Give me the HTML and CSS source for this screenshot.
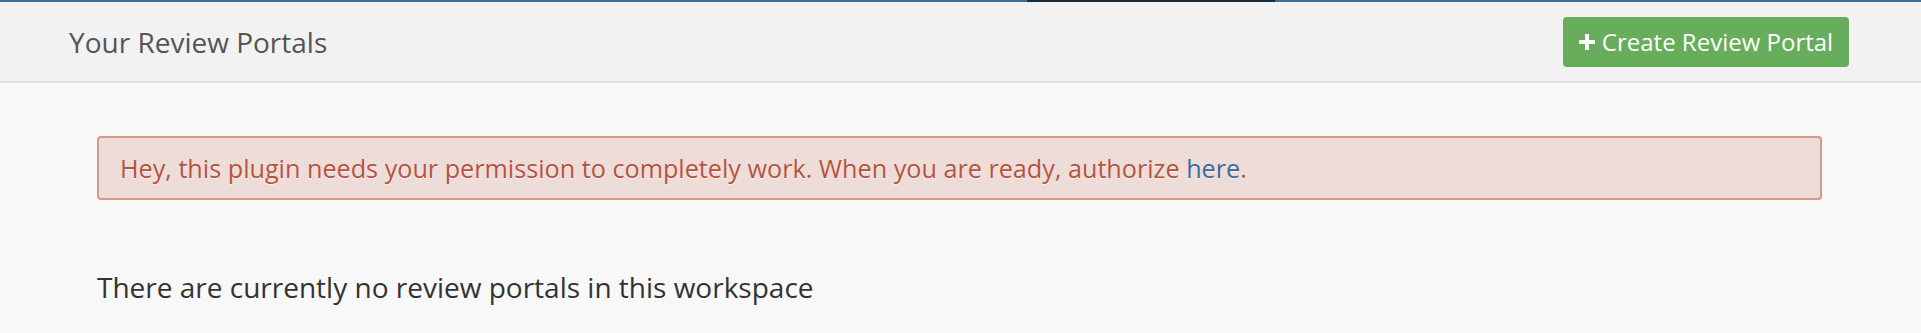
FILE: index.html
```html
<!DOCTYPE html>
<html lang="en">
<head>
  <meta charset="UTF-8">
  <title>Your Review Portals</title>
  <link rel="stylesheet" href="styles.css">
</head>
<body>
  <div class="topbar"><span class="seg-dark"></span></div>
  <header class="page-header">
    <h1 class="title">Your Review Portals</h1>
    <button class="btn-create">
      <svg class="plus" width="16" height="16" viewBox="0 0 16 16"><path d="M6 0h4v6h6v4h-6v6h-4v-6h-6v-4h6z" fill="#fff"/></svg>
      Create Review Portal
    </button>
  </header>

  <main class="content">
    <div class="alert">
      <span>Hey, this plugin needs your permission to completely work. When you are ready, authorize <a href="#">here</a>.</span>
    </div>
    <p class="empty">There are currently no review portals in this workspace</p>
  </main>
</body>
</html>
```

FILE: styles.css
```css
body {
  margin: 0;
  background: #f8f8f8;
  font-family: "Open Sans", "Noto Sans", sans-serif;
  color: #333;
}

.topbar {
  height: 2px;
  background: #3f6d99;
  position: relative;
}
.seg-dark {
  position: absolute;
  left: 1027px;
  width: 248px;
  top: 0;
  height: 2px;
  background: #1f2c3b;
}

.page-header {
  height: 79px;
  background: #f2f2f2;
  border-bottom: 2px solid #e2e2e2;
  display: flex;
  justify-content: space-between;
  align-items: center;
  padding: 0 72px 0 69px;
}
.title {
  margin: 0;
  font-size: 28px;
  font-weight: 400;
  color: #555;
}
.btn-create {
  height: 50px;
  width: 286px;
  border: none;
  border-radius: 4px;
  background: #67ad5b;
  color: #fff;
  font-family: inherit;
  font-size: 24px;
  display: flex;
  align-items: center;
  justify-content: center;
  gap: 7px;
  padding: 0;
}
.plus {
  flex: none;
  margin-top: 1px;
}

.content {
  padding: 53px 99px 0 97px;
}
.alert {
  height: 60px;
  display: flex;
  align-items: center;
  padding: 0 21px;
  background: #eedcd9;
  border: 2px solid #d39a8b;
  border-radius: 4px;
  color: #b5543e;
  font-size: 25.2px;
  text-shadow: 0 1px 0 rgba(255, 255, 255, 0.6);
}
.alert a {
  color: #3a6b96;
  text-decoration: none;
}
.empty {
  margin: 68px 0 0;
  font-size: 28px;
  color: #333;
}
```
